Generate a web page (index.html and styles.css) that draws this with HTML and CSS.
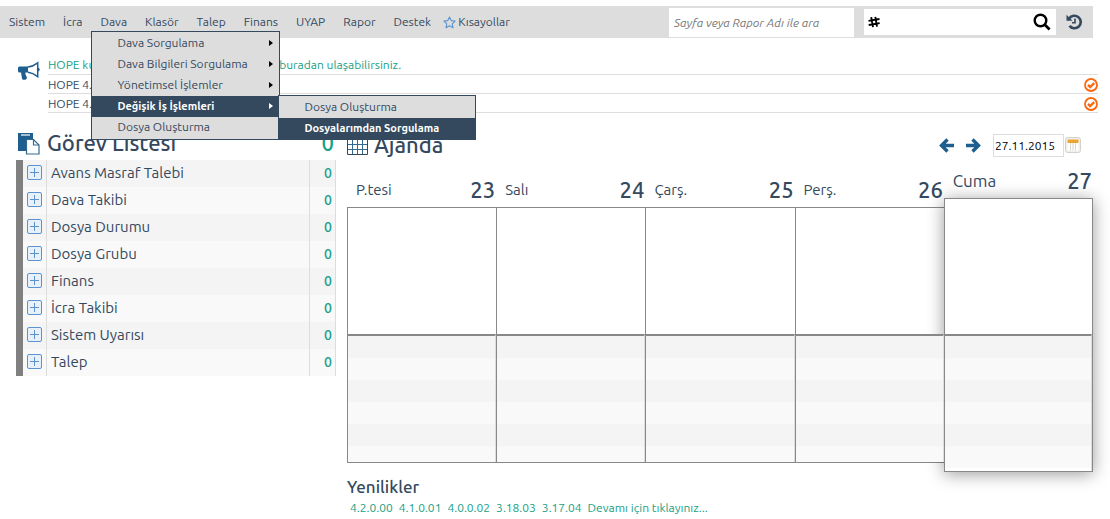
FILE: index.html
```html
<!DOCTYPE html>
<html lang="tr">
<head>
<meta charset="utf-8">
<title>HOPE</title>
<link rel="stylesheet" href="styles.css">
</head>
<body>
<header class="topbar">
  <nav aria-label="Ana menü">
    <ul class="menu">
      <li><a href="#">Sistem</a></li>
      <li><a href="#">İcra</a></li>
      <li class="menu-open"><a href="#">Dava</a>
        <ul class="dropdown">
          <li class="has-sub"><a href="#">Dava Sorgulama</a></li>
          <li class="has-sub"><a href="#">Dava Bilgileri Sorgulama</a></li>
          <li class="has-sub"><a href="#">Yönetimsel İşlemler</a></li>
          <li class="has-sub active"><a href="#">Değişik İş İşlemleri</a>
            <ul class="dropdown submenu">
              <li><a href="#">Dosya Oluşturma</a></li>
              <li class="active"><a href="#">Dosyalarımdan Sorgulama</a></li>
            </ul>
          </li>
          <li><a href="#">Dosya Oluşturma</a></li>
        </ul>
      </li>
      <li><a href="#">Klasör</a></li>
      <li><a href="#">Talep</a></li>
      <li><a href="#">Finans</a></li>
      <li><a href="#">UYAP</a></li>
      <li><a href="#">Rapor</a></li>
      <li><a href="#">Destek</a></li>
      <li class="shortcuts"><a href="#"><svg width="13" height="13" viewBox="0 0 13 13" aria-hidden="true"><path d="M6.5 1l1.7 3.600 3.900.500-2.900 2.700.8 3.900-3.500-1.900-3.500 1.900.800-3.900L.9 5.100l3.900-.5z" fill="none" stroke="#5b93cf" stroke-width="1.100" stroke-linejoin="round"/></svg>Kısayollar</a></li>
    </ul>
  </nav>
  <div class="tools">
    <input class="page-search" type="text" placeholder="Sayfa veya Rapor Adı ile ara" aria-label="Sayfa veya Rapor Adı ile ara">
    <form class="id-search">
      <svg width="12" height="12" viewBox="0 0 12 12" aria-hidden="true"><path d="M3.200 1.200L5 11.200M7.300.800L9 10.600M.500 4.900l11-1.900M.700 9l11-1.900" stroke="#000" stroke-width="1.900" fill="none"/></svg>
      <input type="text" aria-label="Numara ile ara">
      <button type="button" aria-label="Ara"><svg width="18" height="18" viewBox="0 0 18 18"><circle cx="7.500" cy="7.500" r="5.800" fill="none" stroke="#000" stroke-width="2.400"/><path d="M11.600 11.600l5 5" stroke="#000" stroke-width="2.800"/></svg></button>
    </form>
    <button class="history" type="button" aria-label="Geçmiş"><svg width="17" height="16" viewBox="0 0 17 16"><path d="M3.200 4.500A6.300 6.300 0 1 1 3.500 11.900" fill="none" stroke="#34495e" stroke-width="2.600"/><path d="M.5.8v6h6z" fill="#34495e"/><path d="M9 4.500v4.200H6" fill="none" stroke="#34495e" stroke-width="1.600"/></svg></button>
  </div>
</header>

<section class="news" aria-label="Duyurular">
  <svg width="24" height="20" viewBox="0 0 24 20" aria-hidden="true"><path d="M1 7q0-1.500 1.500-1.500H11v6H2.500Q1 11.500 1 10z" fill="#1f5f8f"/><path d="M4 11h4.500q-.8 2.500 1 4.500 1.200 1.800-.5 2.900-2 1-3.800-.2Q4.500 15 4 11z" fill="#1f5f8f"/><path d="M11 6Q16 5.500 20.700 1.800v13.900Q16 11.800 11 11.200" fill="#fff" stroke="#1f5f8f" stroke-width="1.500"/><path d="M20.500 6.500q2.200 0 2.200 2t-2.200 2z" fill="#1f5f8f"/></svg>
  <ul>
    <li><a href="#">HOPE kullanım kılavuzlarının güncel hali ile buradan ulaşabilirsiniz.</a></li>
    <li><span>HOPE 4.2.0.00</span><button type="button" aria-label="Okundu"><svg width="14" height="14" viewBox="0 0 14 14"><circle cx="7" cy="7" r="6" fill="none" stroke="#f9690e" stroke-width="1.800"/><path d="M4 6.800l2.200 2.200 4-3.800" fill="none" stroke="#f9690e" stroke-width="2.400"/></svg></button></li>
    <li><span>HOPE 4.1.0.01</span><button type="button" aria-label="Okundu"><svg width="14" height="14" viewBox="0 0 14 14"><circle cx="7" cy="7" r="6" fill="none" stroke="#f9690e" stroke-width="1.800"/><path d="M4 6.800l2.200 2.200 4-3.800" fill="none" stroke="#f9690e" stroke-width="2.400"/></svg></button></li>
  </ul>
</section>

<main class="columns">
  <section class="tasks">
    <h2>
      <svg width="24" height="23" viewBox="0 0 24 23" aria-hidden="true"><path d="M1 1h15v6h-5.500v12H1z" fill="#1f5f8f"/><path d="M4 3h9" stroke="#fff" stroke-width="1.200"/><path d="M9.500 7.500h7l5.500 5.500v9H9.500z" fill="#fff" stroke="#34698f" stroke-width="1.200"/><path d="M16.500 7.500V13H22" fill="none" stroke="#34698f" stroke-width="1.200"/></svg>
      <span>Görev Listesi</span><span class="total">0</span>
    </h2>
    <table>
      <tbody>
        <tr><td class="toggle"><button type="button" aria-label="Genişlet"></button></td><td>Avans Masraf Talebi</td><td class="count">0</td></tr>
        <tr><td class="toggle"><button type="button" aria-label="Genişlet"></button></td><td>Dava Takibi</td><td class="count">0</td></tr>
        <tr><td class="toggle"><button type="button" aria-label="Genişlet"></button></td><td>Dosya Durumu</td><td class="count">0</td></tr>
        <tr><td class="toggle"><button type="button" aria-label="Genişlet"></button></td><td>Dosya Grubu</td><td class="count">0</td></tr>
        <tr><td class="toggle"><button type="button" aria-label="Genişlet"></button></td><td>Finans</td><td class="count">0</td></tr>
        <tr><td class="toggle"><button type="button" aria-label="Genişlet"></button></td><td>İcra Takibi</td><td class="count">0</td></tr>
        <tr><td class="toggle"><button type="button" aria-label="Genişlet"></button></td><td>Sistem Uyarısı</td><td class="count">0</td></tr>
        <tr><td class="toggle"><button type="button" aria-label="Genişlet"></button></td><td>Talep</td><td class="count">0</td></tr>
      </tbody>
    </table>
  </section>

  <section class="agenda">
    <div class="agenda-head">
      <h2>
        <svg width="21" height="20" viewBox="0 0 21 20" aria-hidden="true"><path d="M.5.500h20v19H.5z" fill="#fff" stroke="#34495e"/><path d="M0 0h21v5H0z" fill="#1f5f8f"/><path d="M5.500 5v14M10.500 5v14M15.500 5v14M1 9.500h19M1 14.500h19" stroke="#34698f"/></svg>
        <span>Ajanda</span>
      </h2>
      <div class="date-nav">
        <button type="button" aria-label="Önceki hafta"><svg width="15" height="15" viewBox="0 0 15 15"><path d="M8.500 1.500l-6 6 6 6M3 7.500h12" fill="none" stroke="#1f5f8f" stroke-width="3.400"/></svg></button>
        <button type="button" aria-label="Sonraki hafta"><svg width="15" height="15" viewBox="0 0 15 15"><path d="M6.500 1.500l6 6-6 6M12 7.500H0" fill="none" stroke="#1f5f8f" stroke-width="3.400"/></svg></button>
        <div class="date-field">
          <input type="text" value="27.11.2015" aria-label="Tarih">
          <button type="button" aria-label="Takvim"><svg width="16" height="16" viewBox="0 0 16 16"><rect x=".5" y=".5" width="15" height="15" rx="2" fill="#f1efec" stroke="#d4d0cc"/><path d="M2.500 6h11v7.500h-11z" fill="#fff"/><path d="M2.500 2.500h11V6h-11z" fill="#eba631"/><path d="M5.500 6v7.500M8 6v7.500M10.500 6v7.500" stroke="#d8d6d4"/></svg></button>
        </div>
      </div>
    </div>
    <div class="week">
      <article class="day"><header><span>P.tesi</span><b>23</b></header><div class="box"><div class="allday"></div><div class="slots"></div></div></article>
      <article class="day"><header><span>Salı</span><b>24</b></header><div class="box"><div class="allday"></div><div class="slots"></div></div></article>
      <article class="day"><header><span>Çarş.</span><b>25</b></header><div class="box"><div class="allday"></div><div class="slots"></div></div></article>
      <article class="day"><header><span>Perş.</span><b>26</b></header><div class="box"><div class="allday"></div><div class="slots"></div></div></article>
      <article class="day today"><header><span>Cuma</span><b>27</b></header><div class="box"><div class="allday"></div><div class="slots"></div></div></article>
    </div>
    <h3>Yenilikler</h3>
    <div class="releases">
      <a href="#">4.2.0.00</a><a href="#">4.1.0.01</a><a href="#">4.0.0.02</a><a href="#">3.18.03</a><a href="#">3.17.04</a><a href="#">Devamı için tıklayınız...</a>
    </div>
  </section>
</main>
</body>
</html>
```

FILE: styles.css
```css
* { box-sizing: border-box; }

body {
  margin: 0;
  padding-top: 6px;
  background: #fff;
  color: #34495e;
  font: 12px/16px Ubuntu, "Noto Sans", sans-serif;
}

a { color: inherit; text-decoration: none; }
ul { list-style: none; margin: 0; padding: 0; }
h2, h3 { margin: 0; font-weight: 500; }
svg { display: block; flex: none; }
input, button { font: inherit; color: inherit; border: 0; padding: 0; }
button { background: none; cursor: pointer; }

/* Top bar */
.topbar {
  display: flex;
  align-items: center;
  justify-content: space-between;
  height: 32px;
  margin-right: 17px;
  padding: 0 10px 0 9px;
  background: #ddd;
}

.menu { display: flex; gap: 18px; white-space: nowrap; }
.menu-open { position: relative; }
.shortcuts { margin-left: -6px; }
.shortcuts a { display: flex; align-items: center; gap: 2px; }

.dropdown {
  position: absolute;
  z-index: 10;
  top: 17px;
  left: -9px;
  width: 189px;
  padding: 1px 0;
  border: 1px solid #34495e;
  background: #ddd;
}

.dropdown a { display: block; padding: 2px 25px 3px; }
.dropdown .active > a {
  background: #34495e;
  color: #fff;
  font-size: 11px;
  font-weight: 700;
}
.dropdown .active { position: relative; }
.has-sub > a {
  display: flex;
  align-items: center;
  justify-content: space-between;
  padding-right: 6px;
}
.has-sub > a::after {
  content: "";
  border: solid transparent;
  border-width: 3px 0 3px 4px;
  border-left-color: #000;
}
.has-sub.active > a::after { border-left-color: #fff; }
.dropdown .submenu { top: -1px; left: 186px; width: 198px; padding: 1px 0 0; }

.tools { display: flex; align-items: center; gap: 10px; }
.page-search {
  width: 185px;
  height: 29px;
  padding: 0 5px;
  background: #fff;
  font-style: italic;
}
.page-search::placeholder { color: #777; opacity: 1; }
.id-search {
  display: flex;
  align-items: center;
  width: 192px;
  height: 26px;
  padding: 0 5px 0 4px;
  background: #fff;
}
.id-search input { flex: 1; min-width: 0; }

/* Announcements */
.news {
  display: flex;
  gap: 7px;
  margin: 18px 12px 0 17px;
}
.news svg { margin-top: 5px; }
.news ul { flex: 1; }
.news li {
  display: flex;
  align-items: center;
  justify-content: space-between;
  height: 19px;
  border-bottom: 1px solid #ddd;
}
.news li + li { padding-top: 2px; }
.news li svg { margin: 0; }
.news a, .releases, .total, .count { color: #16a085; }

/* Main columns */
.columns {
  display: grid;
  grid-template-columns: 320fr 746fr;
  gap: 11px;
  margin: 16px 17px 0 16px;
}

h2 {
  display: flex;
  align-items: center;
  font-size: 22px;
  line-height: 28px;
}

.tasks h2 { gap: 6px; padding: 0 2px 0 1px; }
.total { margin-left: auto; }

.tasks table {
  width: 100%;
  margin-top: 3px;
  border-collapse: collapse;
  border-left: 7px solid #808080;
  font-size: 15px;
}
.tasks tr { height: 27px; background: #f9f9f9; }
.tasks tr:nth-child(odd) { background: #f4f4f4; }
.tasks td { padding: 0 4px 1px; border-right: 1px solid #ddd; }
.tasks .toggle { width: 24px; padding-bottom: 2px; }
.tasks .count {
  width: 26px;
  padding: 0 3px 1px;
  font-size: 14px;
  font-weight: 500;
  text-align: right;
}
.toggle button {
  display: block;
  width: 15px;
  height: 15px;
  border: 1px solid #5b93cf;
  border-radius: 2px;
  background:
    linear-gradient(#5b93cf, #5b93cf) center / 9px 1px no-repeat,
    linear-gradient(#5b93cf, #5b93cf) center / 1px 9px no-repeat,
    #e8f1fa;
}

/* Agenda */
.agenda-head { display: flex; justify-content: space-between; height: 35px; }
.agenda-head h2 { gap: 6px; height: 32px; }
.date-nav { display: flex; align-items: center; gap: 12px; height: 32px; padding-right: 12px; }
.date-field { display: flex; align-items: center; gap: 1px; }
.date-field input {
  width: 71px;
  height: 23px;
  padding: 0 1px;
  border: 1px solid #ddd;
  color: #000;
}

.week {
  display: grid;
  grid-template-columns: repeat(5, 1fr);
  align-items: center;
}
.day header {
  display: flex;
  align-items: center;
  justify-content: space-between;
  height: 34px;
  padding: 0 1px 0 9px;
  font-size: 15px;
}
.day b { font-size: 22px; font-weight: 500; }
.box { border: solid #888; border-width: 1px 0 1px 1px; }
.allday { height: 126px; }
.slots {
  position: relative;
  z-index: 1;
  height: 128px;
  border-top: 2px solid #888;
  border-right: 1px solid #ddd;
  background: repeating-linear-gradient(#f4f4f4 0 22px, #f9f9f9 22px 44px) 0 0 / 100% 132px no-repeat;
}
.today header { font-size: 17px; }
.today .box {
  border-right-width: 1px;
  box-shadow: 0 2px 16px rgba(0, 0, 0, .4);
}
.today .allday { height: 135px; }
.today .slots { height: 137px; background-color: #fff; }

.agenda h3 { margin-top: 4px; font-size: 17px; line-height: 22px; }
.releases { display: flex; flex-wrap: wrap; gap: 6px; margin-top: 2px; padding-left: 3px; }
```
